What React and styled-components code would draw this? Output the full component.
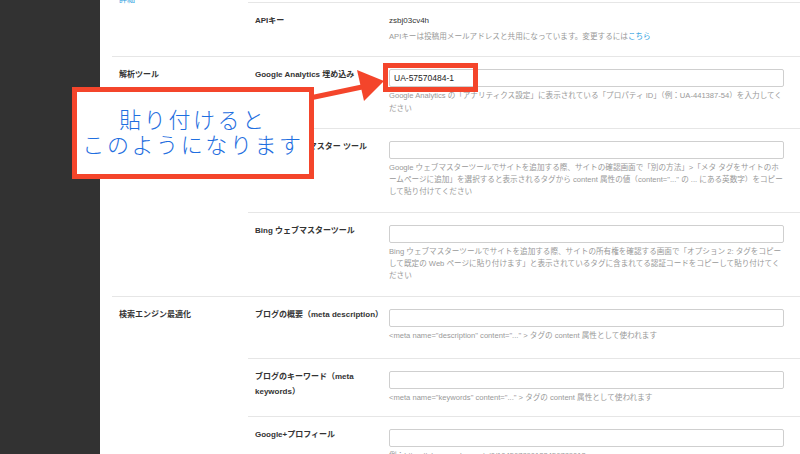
import React from "react";
import styled, { createGlobalStyle } from "styled-components";

const Global = createGlobalStyle`
  html, body { margin: 0; padding: 0; background: #fff; }
  body { font-family: "Liberation Sans", "Noto Sans CJK JP", sans-serif; color: #333; }
  * { box-sizing: border-box; }
`;

const Page = styled.div`
  position: relative;
  width: 800px;
  height: 454px;
  overflow: hidden;
  display: flex;
  background: #fff;
`;

const Sidebar = styled.div`
  width: 100px;
  flex: none;
  background: #323232;
`;

const Main = styled.div`
  flex: 1;
  padding-left: 12px;
  margin-top: -38px;
`;

const Section = styled.section`
  display: flex;
  border-top: 1px solid #e6e6e6;
`;

const SectionHead = styled.div`
  width: 136px;
  flex: none;
  padding: 10px 7px;
  display: flex;
  flex-direction: column;
  gap: ${(p) => p.$gap ?? 2}px;
`;

const SectionLabel = styled.div`
  font-size: 8px;
  font-weight: bold;
  line-height: 15px;
  color: #333;
`;

const SectionLink = styled.a`
  font-size: 8px;
  line-height: 12px;
  color: #2d9ee0;
  text-decoration: none;
`;

const Fields = styled.div`
  flex: 1;
  min-width: 0;
`;

const FieldRow = styled.div`
  display: flex;
  padding: 12px 16px ${(p) => p.$pb ?? 13}px 7px;
  & + & { border-top: 1px solid #e6e6e6; }
`;

const FieldLabel = styled.div`
  width: 134px;
  flex: none;
  padding-right: 5px;
  margin-top: -2px;
  font-size: 8px;
  font-weight: bold;
  line-height: 15px;
  color: #333;
`;

const FieldBody = styled.div`
  flex: 1;
  min-width: 0;
`;

const Value = styled.div`
  font-size: 8px;
  line-height: 12px;
  color: #333;
  margin-bottom: 4px;
`;

const TextInput = styled.input`
  display: block;
  width: 100%;
  height: 18px;
  margin: 0;
  padding: 0 4px;
  border: 1px solid #cfcfcf;
  border-radius: 2px;
  background: #fff;
  font-family: "Liberation Sans", "Noto Sans CJK JP", sans-serif;
  font-size: 8.5px;
  color: #222;
  outline: none;
`;

const Help = styled.div`
  margin-top: ${(p) => (p.$tight ? 0 : 3)}px;
  font-size: 7.6px;
  line-height: 12.3px;
  color: #999;
`;

const Link = styled.a`
  color: #2d9ee0;
  text-decoration: none;
`;

const HighlightBox = styled.div`
  position: absolute;
  left: 383px;
  top: 63px;
  width: 95px;
  height: 29px;
  border: 5px solid #f4452b;
  pointer-events: none;
`;

const Callout = styled.div`
  position: absolute;
  left: 72px;
  top: 87px;
  width: 242px;
  height: 92px;
  border: 5px solid #f4452b;
  background: #fff;
  display: flex;
  flex-direction: column;
  align-items: center;
  justify-content: center;
  padding-bottom: 4px;
  font-family: "Noto Sans CJK JP", sans-serif;
  font-weight: 200;
  font-size: 22px;
  letter-spacing: 2.6px;
  line-height: 25px;
  color: #1f6fe0;
  text-align: center;
`;

const ArrowSvg = styled.svg`
  position: absolute;
  left: 0;
  top: 0;
  pointer-events: none;
`;

function Row({ label, children, pb }) {
  return (
    <FieldRow $pb={pb}>
      <FieldLabel>{label}</FieldLabel>
      <FieldBody>{children}</FieldBody>
    </FieldRow>
  );
}

export default function App() {
  return (
    <>
      <Global />
      <Page>
        <Sidebar />
        <Main>
          <Section>
            <SectionHead $gap={6}>
              <SectionLabel>投稿設定</SectionLabel>
              <SectionLink>詳細</SectionLink>
            </SectionHead>
            <Fields>
              <FieldRow $pb={11}>
                <FieldLabel>メール投稿</FieldLabel>
                <FieldBody>
                  <Value>有効</Value>
                </FieldBody>
              </FieldRow>
              <FieldRow>
                <FieldLabel>APIキー</FieldLabel>
                <FieldBody>
                  <Value>zsbj03cv4h</Value>
                  <Help $tight>
                    APIキーは投稿用メールアドレスと共用になっています。変更するには<Link>こちら</Link>
                  </Help>
                </FieldBody>
              </FieldRow>
            </Fields>
          </Section>

          <Section>
            <SectionHead>
              <SectionLabel>解析ツール</SectionLabel>
            </SectionHead>
            <Fields>
              <Row label="Google Analytics 埋め込み">
                <TextInput readOnly defaultValue="UA-57570484-1" />
                <Help>
                  Google Analytics の「アナリティクス設定」に表示されている「プロパティ ID」（例：UA-441387-54）を入力してください
                </Help>
              </Row>
              <Row label="Google ウェブマスター ツール">
                <TextInput readOnly />
                <Help>
                  Google ウェブマスターツールでサイトを追加する際、サイトの確認画面で「別の方法」&gt;「メタ タグをサイトのホームページに追加」を選択すると表示されるタグから content 属性の値（content="..." の ... にある英数字）をコピーして貼り付けてください
                </Help>
              </Row>
              <Row label="Bing ウェブマスターツール">
                <TextInput readOnly />
                <Help>
                  Bing ウェブマスターツールでサイトを追加する際、サイトの所有権を確認する画面で「オプション 2: タグをコピーして既定の Web ページに貼り付けます」と表示されているタグに含まれてる認証コードをコピーして貼り付けてください
                </Help>
              </Row>
            </Fields>
          </Section>

          <Section>
            <SectionHead>
              <SectionLabel>検索エンジン最適化</SectionLabel>
            </SectionHead>
            <Fields>
              <Row label="ブログの概要（meta description）" pb={16}>
                <TextInput readOnly />
                <Help>&lt;meta name="description" content="..." &gt; タグの content 属性として使われます</Help>
              </Row>
              <Row label="ブログのキーワード（meta keywords）" pb={12}>
                <TextInput readOnly />
                <Help>&lt;meta name="keywords" content="..." &gt; タグの content 属性として使われます</Help>
              </Row>
              <Row label="Google+プロフィール">
                <TextInput readOnly />
                <Help>例：https://plus.google.com/u/0/104567890123456789012</Help>
              </Row>
            </Fields>
          </Section>
        </Main>

        <HighlightBox />
        <ArrowSvg width="800" height="454" viewBox="0 0 800 454">
          <line x1="305" y1="99" x2="362" y2="87" stroke="#f4452b" strokeWidth="5" />
          <polygon points="384,81 357,70 364,101" fill="#f4452b" />
        </ArrowSvg>
        <Callout>
          <div>貼り付けると</div>
          <div>このようになります</div>
        </Callout>
      </Page>
    </>
  );
}
